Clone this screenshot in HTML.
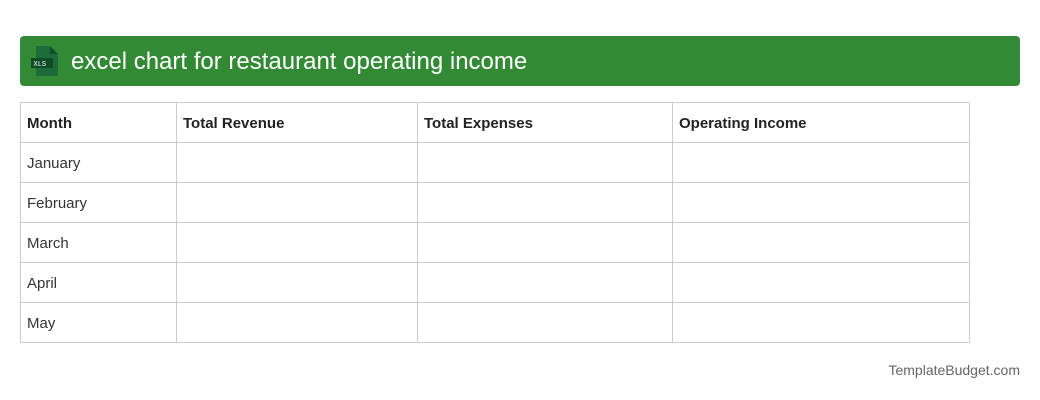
<!DOCTYPE html>
<html><head><style>
body{margin:0;width:1040px;height:400px;background:#fff;font-family:"Liberation Sans",Arial,sans-serif;position:relative;overflow:hidden}
.bar{position:absolute;left:20px;top:36px;width:1000px;height:50px;background:#328a35;border-radius:4px}
.bar span{position:absolute;left:51px;top:11px;color:#fff;font-size:24px;line-height:30px}
table{position:absolute;left:20px;top:102px;border-collapse:collapse;width:950px}
td{border:1px solid #ccc;height:40px;padding:0 6px;font-size:15px;color:#333;padding-top:2px;box-sizing:border-box}
tr:first-child td{font-weight:bold;color:#222}
.foot{position:absolute;right:20px;top:362px;font-size:14px;color:#666}
</style></head><body>
<div class="bar">
<svg style="position:absolute;left:10px;top:9px" width="30" height="32" viewBox="0 0 30 32">
<path d="M6 1h14l8 8v22H6z" fill="#1d6b3a"/><path d="M20 1v8h8z" fill="#154f2b"/>
<rect x="1" y="13" width="22" height="10" fill="#0e4a26"/>
<text x="3.5" y="21" font-size="7" fill="#fff" font-family="Liberation Mono">XLS</text></svg>
<span>excel chart for restaurant operating income</span></div>
<table>
<tr><td style="width:156px">Month</td><td style="width:241px">Total Revenue</td><td style="width:255px">Total Expenses</td><td>Operating Income</td></tr>
<tr><td>January</td><td></td><td></td><td></td></tr>
<tr><td>February</td><td></td><td></td><td></td></tr>
<tr><td>March</td><td></td><td></td><td></td></tr>
<tr><td>April</td><td></td><td></td><td></td></tr>
<tr><td>May</td><td></td><td></td><td></td></tr>
</table>
<div class="foot">TemplateBudget.com</div>
</body></html>
